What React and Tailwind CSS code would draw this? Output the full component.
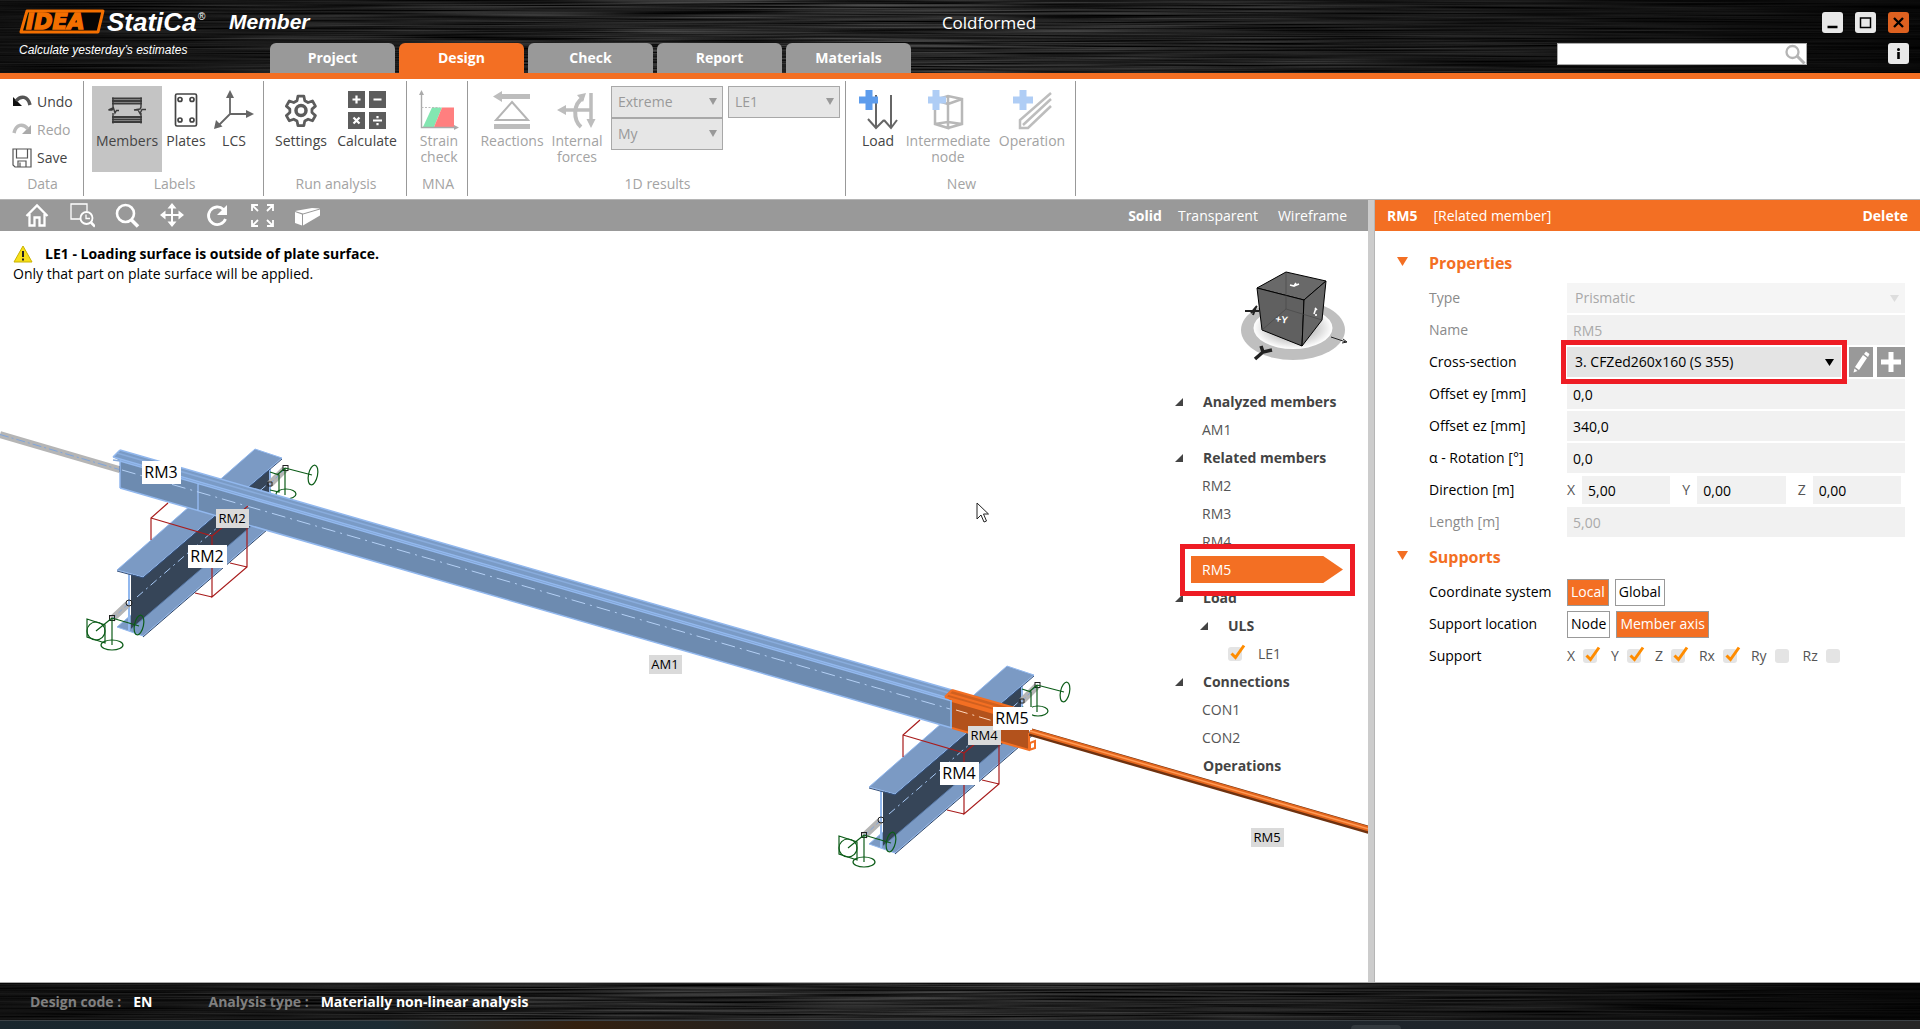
import React from "react";

const uiFont = "font-['Open_Sans','Noto_Sans',sans-serif]";

function BrushedMetal({ seed }) {
  const id = "metal" + seed;
  return (
    <svg className="absolute inset-0 h-full w-full" preserveAspectRatio="none" aria-hidden="true">
      <defs>
        <filter id={id} x="0" y="0" width="100%" height="100%" colorInterpolationFilters="sRGB">
          <feTurbulence type="fractalNoise" baseFrequency="0.005 0.6" numOctaves="2" seed={seed} />
          <feColorMatrix values="0.6 0 0 0 -0.12  0.6 0 0 0 -0.12  0.6 0 0 0 -0.12  0 0 0 0 1" />
        </filter>
        <linearGradient id={id + "g"}>
          <stop offset="0" stopColor="#000" stopOpacity="0.65" />
          <stop offset="0.3" stopColor="#000" stopOpacity="0.3" />
          <stop offset="0.5" stopColor="#000" stopOpacity="0.2" />
          <stop offset="0.75" stopColor="#000" stopOpacity="0.5" />
          <stop offset="1" stopColor="#000" stopOpacity="0.85" />
        </linearGradient>
      </defs>
      <rect width="100%" height="100%" filter={`url(#${id})`} />
      <rect width="100%" height="100%" fill={`url(#${id}g)`} />
    </svg>
  );
}

function Logo() {
  return (
    <svg width="330" height="62" viewBox="0 0 330 62" className="relative block" role="img" aria-label="IDEA StatiCa Member">
      <polygon points="27,11 103,11 98,32 21,32" fill="#050505" stroke="#f36f00" strokeWidth="3" strokeLinejoin="round" />
      <text x="26" y="29" fontFamily="DejaVu Sans" fontWeight="700" fontStyle="italic" fontSize="22" fill="#f36f00" stroke="#f36f00" strokeWidth="1.500">IDEA</text>
      <text x="107" y="31" fontFamily="Liberation Sans" fontWeight="700" fontStyle="italic" fontSize="26" fill="#fff">StatiCa</text>
      <text x="198" y="20" fontFamily="Liberation Sans" fontSize="10" fill="#fff">®</text>
      <text x="229" y="29" fontFamily="Liberation Sans" fontWeight="700" fontStyle="italic" fontSize="21" fill="#fff">Member</text>
      <text x="19" y="54" fontFamily="Liberation Sans" fontStyle="italic" fontSize="12" fill="#fff">Calculate yesterday’s estimates</text>
    </svg>
  );
}

function Header() {
  const tabs = ["Project", "Design", "Check", "Report", "Materials"];
  const chrome = "flex h-[21px] w-[21px] items-center justify-center rounded-[3px] bg-[#e8e8e8]";
  return (
    <header className="relative flex h-[79px] justify-between overflow-hidden border-b-[6px] border-[#f36f23] bg-black">
      <BrushedMetal seed={4} />
      <div className="absolute left-0 top-0"><Logo /></div>
      <h1 className="absolute inset-x-0 top-3 pl-[58px] text-center text-[17px] leading-[22px] text-white">Coldformed</h1>
      <nav className="relative flex items-end gap-1 pl-[270px]">
        {tabs.map((t) => (
          <button key={t} className={`h-[30px] w-[125px] rounded-t-md pb-px text-sm font-bold text-white ${t === "Design" ? "bg-[#f36f23]" : "bg-[#999]"}`}>{t}</button>
        ))}
      </nav>
      <div className="relative flex flex-col items-end gap-[10px] pr-[11px] pt-3">
        <div className="flex gap-3">
          <button aria-label="Minimize" className={chrome}>
            <svg width="15" height="15"><path d="M2.500 12h10" stroke="#000" strokeWidth="2.500" /></svg>
          </button>
          <button aria-label="Maximize" className={chrome}>
            <svg width="15" height="15"><rect x="2.500" y="3" width="10" height="9.500" fill="none" stroke="#000" strokeWidth="1.500" /></svg>
          </button>
          <button aria-label="Close" className="flex h-[21px] w-[21px] items-center justify-center rounded-[3px] bg-[#dd6120]">
            <svg width="15" height="15"><path d="M3 3l9 9M12 3l-9 9" stroke="#000" strokeWidth="2.300" /></svg>
          </button>
        </div>
        <div className="flex gap-[81px]">
          <div className="relative">
            <input aria-label="Search" className="block h-[22px] w-[250px] border border-[#aaa] bg-white px-1 text-sm outline-none" />
            <svg className="absolute right-px top-0" width="22" height="22" fill="none" stroke="#b4b4b4" strokeWidth="2.300"><circle cx="8.500" cy="9" r="6" /><path d="M13 13l7.500 7.500" strokeWidth="3" /></svg>
          </div>
          <button aria-label="Info" className={chrome}>
            <svg width="9" height="15"><circle cx="4.500" cy="3.500" r="1.500" /><path d="M4.500 6v7" stroke="#000" strokeWidth="2.600" /></svg>
          </button>
        </div>
      </div>
    </header>
  );
}

const icons = {
  undo: <svg width="20" height="14" viewBox="0 0 20 14"><path d="M1 2v9h9z" fill="#111" /><path d="M4 6C9 0 16 1 18 10" fill="none" stroke="#555" strokeWidth="3.500" /></svg>,
  redo: <svg width="20" height="14" viewBox="0 0 20 14"><path d="M19 2v9h-9z" fill="#aaa" /><path d="M16 6C11 0 4 1 2 10" fill="none" stroke="#bbb" strokeWidth="3.500" /></svg>,
  save: <svg width="20" height="20" viewBox="0 0 20 20" fill="none" stroke="#555" strokeWidth="1.200"><path d="M1 1h18v18H3l-2-2zM4.500 1v9h11V1M6 19v-6h8v6M8 14.500v4" /></svg>,
  members: <svg width="40" height="40" viewBox="0 0 40 40" fill="none" stroke="#3c3c3c" strokeWidth="1.600"><path d="M5 8.500h30M5 11h30M5 13.500h30" strokeWidth="2.200" /><path d="M5 27h30M5 29.500h30M5 32h30" strokeWidth="2.200" /><path d="M6 7.500V18l-4.500 2H5l1.500-2 1.500 5 1.500-2.500H12M6 33.500V23M34 7.500V17l-1 2-6 1h4l2 3.500 2-4h4M34 33.500V23" strokeWidth="1.400" /></svg>,
  plates: <svg width="40" height="40" viewBox="0 0 40 40" fill="none" stroke="#444" strokeWidth="1.700"><rect x="9.500" y="4" width="21" height="32" rx="1.500" /><circle cx="14" cy="9.500" r="2" /><circle cx="26" cy="9.500" r="2" /><circle cx="14" cy="30" r="2" /><circle cx="26" cy="30" r="2" /></svg>,
  lcs: <svg width="40" height="40" viewBox="0 0 40 40" fill="#666" stroke="#666" strokeWidth="1.800"><path d="M16 6v18h18M16 24L4 36" fill="none" /><path d="M16 0l4 8h-8zM40 24l-8 4v-8zM0 39l2-9 6.500 6.500z" stroke="none" /></svg>,
  settings: <svg width="40" height="40" viewBox="0 0 40 40" fill="none" stroke="#5c5c5c" strokeWidth="3" strokeLinejoin="round"><path d="M16.800 5h6.400l1 5 3.600 2 4.800-1.700 3.200 5.600-3.800 3.300v3.700l3.800 3.300-3.200 5.600-4.800-1.700-3.600 2-1 5h-6.400l-1-5-3.600-2-4.800 1.700-3.200-5.600 3.800-3.300v-3.700l-3.800-3.300 3.200-5.600 4.800 1.700 3.600-2z" transform="translate(1.500 1.500) scale(0.920)" /><circle cx="20" cy="20.500" r="5" strokeWidth="3.500" /></svg>,
  calculate: <svg width="40" height="40" viewBox="0 0 40 40" fill="#5c5c5c"><path d="M1 1h17v17H1zM22 1h17v17H22zM1 22h17v17H1zM22 22h17v17H22z" /><path d="M9.500 5.500v8M5.500 9.500h8M26.500 9.500h8M6.500 27.500l6 6M12.500 27.500l-6 6M26 30.500h9M30.500 26v2.200M30.500 33v2.200" stroke="#fff" strokeWidth="2.200" /></svg>,
  strain: <svg width="40" height="40" viewBox="0 0 40 40"><path d="M13 17.500h10L15 37H4z" fill="#83e6b1" /><path d="M23 17.500h12V37H15z" fill="#ff7f7f" /><path d="M2.500 3v34.500H37" fill="none" stroke="#aaa" strokeWidth="1.400" /><path d="M2.500 17.500h18" stroke="#bbb" strokeDasharray="2 1.500" /><path d="M2.500 0l2.500 5H0zM40 37.500l-5 2.500v-5z" fill="#aaa" /></svg>,
  reactions: <svg width="40" height="40" viewBox="0 0 40 40" fill="#bdbdbd"><path d="M10 4h28v5H10v3L1 6.500 10 1zM2 34h36v5H2z" /><path d="M20 12l16 18H4z" fill="none" stroke="#b5b5b5" strokeWidth="2" /></svg>,
  forces: <svg width="40" height="40" viewBox="0 0 40 40" fill="#bdbdbd" stroke="#bdbdbd"><path d="M6 20h28" strokeWidth="3.500" /><path d="M26 8c-10 6-10 22-2 29" fill="none" strokeWidth="4" /><path d="M34 3v29" strokeWidth="3.500" /><path d="M0 20l9-5v10zM29 3l-9 2 6 7zM34 38l-4.500-9H38.500z" stroke="none" /></svg>,
  load: <svg width="40" height="40" viewBox="0 0 40 40" fill="none" stroke="#666" strokeWidth="2"><path d="M18 5v32M10 29l8 9 8-8M33 5v32M26 30l7 8 6-8" /><path d="M11 0v20M1 10h19" stroke="#5d9cec" strokeWidth="7" /></svg>,
  node: <svg width="40" height="40" viewBox="0 0 40 40" fill="none" stroke="#b8b8b8" strokeWidth="2.500"><path d="M7 10v24l13 4V14L7 10l13-4 14 3v25l-14 4M20 14l14-5M20 6v26L7 34M20 32l14 2" /><path d="M8 0v20M-2 10h20" stroke="#afcdf5" strokeWidth="7" /></svg>,
  operation: <svg width="40" height="40" viewBox="0 0 40 40" fill="none" stroke="#bdbdbd" strokeWidth="2.500"><path d="M39 3L8 30v8h8L39 16M11 35L39 9" /><path d="M11 0v20M1 10h20" stroke="#afcdf5" strokeWidth="7" /></svg>,
};

function Tool({ icon, label, width, active, muted }) {
  return (
    <button className={`flex h-[86px] flex-col items-center pt-1 text-sm leading-4 ${width} ${active ? "bg-[#c4c4c4]" : ""} ${muted ? "text-[#a3a3a3]" : "text-[#444]"}`}>
      {icons[icon]}
      <span className="pt-[3px]">{label}</span>
    </button>
  );
}

function Group({ caption, width, children }) {
  return (
    <section className={`flex h-[115px] shrink-0 flex-col justify-between border-r border-[#999] ${width}`}>
      {children}
      <div className="pl-[2px] text-center text-sm leading-6 text-[#a3a3a3]">{caption}</div>
    </section>
  );
}

function RibbonSelect({ value, label }) {
  return (
    <div className="relative h-8 w-[112px]">
      <select aria-label={label} disabled className="h-full w-full appearance-none border border-[#a8a8a8] bg-[#e6e6e6] pl-[6px] text-sm text-[#999] opacity-100">
        <option>{value}</option>
      </select>
      <svg className="pointer-events-none absolute right-[6px] top-3" width="8" height="7"><path d="M0 0h8l-4 7z" fill="#999" /></svg>
    </div>
  );
}

function Ribbon() {
  const small = "flex h-7 items-center gap-[5px]";
  return (
    <div className="flex h-[121px] border-b border-[#b5b5b5] bg-white pt-[2px]">
      <Group caption="Data" width="w-[84px]">
        <div className="flex flex-col pl-3 pt-[7px] text-sm text-[#444]">
          <button className={small}>{icons.undo}Undo</button>
          <button className={small + " text-[#a3a3a3]"}>{icons.redo}Redo</button>
          <button className={small}>{icons.save}Save</button>
        </div>
      </Group>
      <Group caption="Labels" width="w-[180px]">
        <div className="flex pl-2 pt-[5px]">
          <Tool icon="members" label="Members" width="w-[70px]" active />
          <Tool icon="plates" label="Plates" width="w-12" />
          <Tool icon="lcs" label="LCS" width="w-12" />
        </div>
      </Group>
      <Group caption="Run analysis" width="w-[143px]">
        <div className="flex pl-1 pt-[5px]">
          <Tool icon="settings" label="Settings" width="w-[66px]" />
          <Tool icon="calculate" label="Calculate" width="w-[66px]" />
        </div>
      </Group>
      <Group caption="MNA" width="w-[61px]">
        <div className="flex pl-1 pt-[5px]">
          <Tool icon="strain" label={<>Strain<br />check</>} width="w-14" muted />
        </div>
      </Group>
      <Group caption="1D results" width="w-[378px]">
        <div className="flex pl-[9px] pt-[5px]">
          <Tool icon="reactions" label="Reactions" width="w-[70px]" muted />
          <Tool icon="forces" label={<>Internal<br />forces</>} width="w-[60px]" muted />
          <div className="ml-1 flex gap-[5px]">
            <div>
              <RibbonSelect label="Extreme type" value="Extreme" />
              <RibbonSelect label="Result component" value="My" />
            </div>
            <RibbonSelect label="Load effect" value="LE1" />
          </div>
        </div>
      </Group>
      <Group caption="New" width="w-[230px]">
        <div className="flex pl-2 pt-[5px]">
          <Tool icon="load" label="Load" width="w-12" />
          <Tool icon="node" label={<>Intermediate<br />node</>} width="w-[92px]" muted />
          <Tool icon="operation" label="Operation" width="w-[76px]" muted />
        </div>
      </Group>
    </div>
  );
}

const viewIcons = [
  ["Home", <path key="a" d="M1.500 13L12 2.500 22.500 13M4.500 11v11.500h5v-8h5v8h5V11" fill="none" stroke="#fff" strokeWidth="2.300" />],
  ["Zoom window", <g key="a" fill="none" stroke="#fff" strokeWidth="1.300"><path d="M17 8V1H1v15h9" /><circle cx="16.500" cy="15" r="6" strokeWidth="1.800" /><path d="M16 11.500V15.500h4" /><path d="M21 19.500l4 4" strokeWidth="2.600" /></g>],
  ["Zoom", <g key="a" fill="none" stroke="#fff"><circle cx="10.500" cy="10.500" r="8.500" strokeWidth="2.600" /><path d="M16.500 17l6.500 6.500" strokeWidth="3.500" /></g>],
  ["Pan", <g key="a" fill="#fff"><path d="M11 5h2v14h-2zM5 11h14v2H5z" /><path d="M12 0l4.500 5.500h-9zM12 24l4.500-5.500h-9zM0 12l5.500-4.500v9zM24 12l-5.500-4.500v9z" /></g>],
  ["Rotate", <g key="a"><path d="M18.500 6.500A8.800 8.800 0 1 0 20.500 16" fill="none" stroke="#fff" strokeWidth="2.800" /><path d="M22 2v10H12z" fill="#fff" /></g>],
  ["Fit", <g key="a" fill="none" stroke="#fff" strokeWidth="1.800"><path d="M2 8V2h6M2 2l6 6M17 2h6v6M23 2l-6 6M2 17v6h6M2 23l6-6M17 23h6v-6M23 23l-6-6" /></g>],
  ["Section", <g key="a" fill="#fff"><path d="M0 9l7 2.500v11l-7-2.500zM8 11.500l17-5v6L8 22.500zM0 8l17-3 8 .5-17 5z" /></g>],
];

function ViewBar() {
  return (
    <div className="flex h-[31px] items-center justify-between bg-[#999] pl-[14px] pr-[21px] pt-px text-white">
      <div className="flex">
        {viewIcons.map(([name, art]) => (
          <button key={name} aria-label={name} className="flex w-[45px] justify-center"><svg width="26" height="26" viewBox="-1 0 26 26">{art}</svg></button>
        ))}
      </div>
      <div className="flex gap-4 text-sm">
        <button className="font-bold">Solid</button>
        <button>Transparent</button>
        <button className="ml-1">Wireframe</button>
      </div>
    </div>
  );
}

function CrossMember() {
  return (
    <g>
      <polygon points="117,627 143,636 282,516 255,508" fill="#7b9ac4" stroke="#92b8ee" />
      <path d="M143 637L282 517" stroke="#2b4468" />
      <polygon points="131,575 270,456 270,510 131,629" fill="#364558" />
      <path d="M131 629L270 510" stroke="#5878a5" />
      <path d="M137 597L270 482" stroke="#a9cbf8" strokeDasharray="8 4 2 4" />
      <path d="M129 574v57M270 469v40" stroke="#92b8ee" strokeWidth="2" />
      <polygon points="117,570 143,577 282,458 255,449" fill="#7b9ac4" stroke="#92b8ee" />
      <path d="M117 571l26 7L282 459" fill="none" stroke="#34507a" />
      <path d="M128 604l-16 15M270 484l15-15" stroke="#b5b5b5" strokeWidth="7" />
      <path d="M128 604l-16 15M270 484l15-15" stroke="#7fa5dc" strokeDasharray="5 3" />
      <g fill="none" stroke="#222"><circle cx="129" cy="603" r="3" /><rect x="109.500" y="615.500" width="5" height="5" /><rect x="283" y="465.500" width="5" height="5" /><path d="M268 482h4v4h-4z" /></g>
      <g fill="none" stroke="#0c5c18" strokeWidth="1.200">
        <path d="M112 618v27M112 618l27 8M112 618l-16 13M87 619l18 6v18l-18-6z" />
        <ellipse cx="112" cy="645" rx="11" ry="5" /><ellipse cx="139" cy="625" rx="4.500" ry="10" transform="rotate(12 139 625)" /><circle cx="96" cy="631" r="9" />
        <path d="M285 468v27M285 468l27 7M270 472l9 3v17l-9-2M285 468l-8 7" />
        <ellipse cx="286" cy="494" rx="10" ry="5" /><ellipse cx="313" cy="475" rx="4.500" ry="10" transform="rotate(12 313 475)" />
      </g>
    </g>
  );
}

function HiddenBox() {
  return <path d="M168 503l-17 15v22M151 518l61 18v61l35-30v-40M212 536l36-30M212 597l-17-4M247 567l-17-4" fill="none" stroke="#a81c1c" strokeWidth="1.200" />;
}

function Tag({ x, y, text, big }) {
  return (
    <g>
      <rect x={x} y={y} width={big ? 39 : 33} height={big ? 23 : 19} fill={big ? "#fff" : "#dadada"} />
      <text x={x + (big ? 19 : 16)} y={y + (big ? 17 : 14)} textAnchor="middle" fontSize={big ? 16 : 13} fill="#000" className={uiFont}>{text}</text>
    </g>
  );
}

function Scene() {
  return (
    <svg className="absolute inset-0 h-full w-full" viewBox="0 231 1368 751" preserveAspectRatio="xMinYMin slice" role="img" aria-label="3D model of the members">
      <path d="M0 434.500L121 470" stroke="#b5b5b5" strokeWidth="7" />
      <path d="M0 434.500L121 470" stroke="#7fa5dc" strokeDasharray="9 3 2 3" />
      <path d="M120 466v6" stroke="#222" strokeWidth="2" />
      <CrossMember />
      <g transform="translate(752 217)"><CrossMember /></g>
      <polygon points="120,460 952,700 952,728 120,488" fill="#6d8bb0" />
      <polygon points="120,450 952,690 945,698 952,701 120,461 113,457" fill="#7a9bc6" />
      <g fill="none" stroke="#92b8ee" strokeWidth="1.500">
        <path d="M120 450L952 690M113 457L945 697M120 461L952 701M120 488L952 728M120 488v-28M198 483v28M113 457l7-7" />
        <path d="M117 453L949 693M113 460l7 1" stroke="#89acdc" />
        <path d="M122 470L950 709" stroke="#b4d0f5" strokeWidth="1" strokeDasharray="14 5 2 5" />
      </g>
      <HiddenBox />
      <g transform="translate(752 217)"><HiddenBox /></g>
      <polygon points="952,700 1029,722 1029,750 952,728" fill="#b3521c" />
      <polygon points="952,690 1029,712 1029,723 952,701 945,697" fill="#d0601f" />
      <path d="M952 690L1029 712M945 697L1029 721M952 701L1029 723M949 694l80 23M952 728l77 22v-17M945 697l7-7M1029 750l6-2v-7l-5 2v6" fill="none" stroke="#f36f23" strokeWidth="2" />
      <path d="M951 700v28" stroke="#92b8ee" strokeWidth="1.500" />
      <path d="M956 710L1000 723" stroke="#ffd9c0" strokeDasharray="12 5 2 5" />
      <path d="M1030 732L1369 830" stroke="#6f3210" strokeWidth="8" />
      <path d="M1030 731L1369 829" stroke="#e4661d" strokeWidth="5" />
      <path d="M1030 731L1369 829" stroke="#ff9a55" strokeWidth="1.500" />
      <Tag x={142} y={461} text="RM3" big />
      <Tag x={216} y={509} text="RM2" />
      <Tag x={188} y={545} text="RM2" big />
      <Tag x={649} y={655} text="AM1" />
      <Tag x={968} y={726} text="RM4" />
      <Tag x={993} y={707} text="RM5" big />
      <Tag x={940} y={762} text="RM4" big />
      <Tag x={1251} y={828} text="RM5" />
      <path d="M977 503v16l4-4 3 7 2.500-1-3-7h5z" fill="#fff" stroke="#222" />
      <NavigationCube />
    </svg>
  );
}

function NavigationCube() {
  return (
    <g>
      <defs><radialGradient id="shade"><stop offset="0" stopColor="#888" /><stop offset="1" stopColor="#fff" /></radialGradient></defs>
      <ellipse cx="1293" cy="330" rx="52" ry="30" fill="#bfbfbf" />
      <ellipse cx="1293" cy="328" rx="39.500" ry="21" fill="url(#shade)" />
      <g stroke="#000" strokeLinejoin="round">
        <polygon points="1286,272 1326,281 1304,300 1257,288" fill="#696969" />
        <polygon points="1257,288 1304,300 1302,346 1262,330" fill="#606060" />
        <polygon points="1304,300 1326,281 1322,320 1302,346" fill="#666" />
      </g>
      <path d="M1286 273v36l36 11M1286 309l-24 21" fill="none" stroke="#444" strokeOpacity="0.600" />
      <text x="1275" y="322" fontFamily="Liberation Sans" fontSize="10" fontWeight="700" fill="#fff" transform="rotate(8 1275 322)">+Y</text>
      <path d="M1290 285l4 1 2-3M1294 286l5-2M1314 314l2-6M1315 308l2 2M1316 314v2" fill="none" stroke="#fff" strokeWidth="1.600" />
      <path d="M1245 311h14M1251 313l6-7M1256 307l-3 8" stroke="#222" strokeWidth="2" />
      <path d="M1255 359l8-7 9-2M1263 352l-2-6" fill="none" stroke="#222" strokeWidth="3.500" />
      <path d="M1331 337l15 5M1343 339l4 3-5 1" fill="none" stroke="#222" />
    </g>
  );
}

function Tick({ checked, label }) {
  return (
    <span className="relative inline-block h-[14px] w-[14px]">
      <input type="checkbox" aria-label={label} defaultChecked={checked} className="peer block h-[14px] w-[14px] appearance-none rounded-[3px] bg-[#e4e4e4]" />
      <svg className="pointer-events-none absolute -top-[3px] left-[2px] hidden peer-checked:block" width="16" height="16"><path d="M1.500 9.500l4 4L14 1.500" fill="none" stroke="#ff8c00" strokeWidth="3" /></svg>
    </span>
  );
}

function Caret() {
  return <svg width="8" height="8" className="mr-5 shrink-0"><path d="M8 0v8H0z" fill="#444" /></svg>;
}

function Tree() {
  const head = "flex h-7 items-center font-bold text-[#444]";
  const item = "flex h-7 items-center pl-[27px] text-[#555]";
  return (
    <ul className="absolute right-0 top-[157px] w-[193px] text-sm">
      <li className={head}><Caret />Analyzed members</li>
      <li className={item}>AM1</li>
      <li className={head}><Caret />Related members</li>
      <li className={item}>RM2</li>
      <li className={item}>RM3</li>
      <li className={item}>RM4</li>
      <li className="relative z-10 h-7">
        <div className="absolute -top-3 left-[5px] h-[52px] w-[175px] border-[5px] border-[#ee1c24] bg-white" />
        <button className="absolute left-4 top-0 flex h-[27px] w-[152px] items-center bg-[#f36f23] pl-[11px] text-white [clip-path:polygon(0_0,87%_0,100%_50%,87%_100%,0_100%)]">RM5</button>
      </li>
      <li className={head}><Caret />Load</li>
      <li className={head + " pl-[25px]"}><Caret />ULS</li>
      <li className="flex h-7 items-center gap-4 pl-[53px] text-[#555]"><Tick checked label="LE1" />LE1</li>
      <li className={head}><Caret />Connections</li>
      <li className={item}>CON1</li>
      <li className={item}>CON2</li>
      <li className={head + " pl-7"}>Operations</li>
    </ul>
  );
}

function Viewport() {
  return (
    <main className="flex min-w-0 flex-1 flex-col">
      <ViewBar />
      <div className="relative flex-1 overflow-hidden bg-white">
        <Scene />
        <div className="relative pl-[13px] pt-[13px] text-sm leading-5 text-black">
          <p className="flex items-center gap-3 font-bold">
            <svg width="20" height="18"><path d="M10 1l9 16H1z" fill="#f8e01a" stroke="#c9b200" /><path d="M10 6v6M10 13.500v2" stroke="#222" strokeWidth="2" /></svg>
            LE1 - Loading surface is outside of plate surface.
          </p>
          <p>Only that part on plate surface will be applied.</p>
        </div>
        <Tree />
      </div>
    </main>
  );
}

function Row({ label, id, muted, children }) {
  return (
    <div className="flex h-8 items-center">
      <label htmlFor={id} className={`w-[138px] shrink-0 ${muted ? "text-[#8a8a8a]" : "text-black"}`}>{label}</label>
      {children}
    </div>
  );
}

function Field({ id, value, muted }) {
  return <input id={id} defaultValue={value} disabled={muted} className={`h-[30px] min-w-0 flex-1 bg-[#f1f1f1] px-[6px] ${muted ? "text-[#aaa]" : "text-black"}`} />;
}

function SectionTitle({ children }) {
  return (
    <h2 className="-ml-[32px] flex h-[38px] items-center gap-[21px] text-base font-bold text-[#f36f23]">
      <svg width="11" height="9" className="-mt-1"><path d="M0 0h11l-5.500 9z" fill="#f36f23" /></svg>
      {children}
    </h2>
  );
}

function Properties() {
  const toggle = "h-[27px] border border-[#999] px-[3px]";
  return (
    <aside className="w-[545px] shrink-0 bg-white text-sm">
      <div className="flex h-[31px] items-center bg-[#f36f23] px-3 pt-px text-white">
        <span className="font-bold">RM5</span>
        <span className="ml-4 flex-1">[Related member]</span>
        <button className="font-bold">Delete</button>
      </div>
      <form className="pl-[54px] pr-[15px] pt-[13px]">
        <SectionTitle>Properties</SectionTitle>
        <Row label="Type" id="type" muted>
          <div className="relative h-[30px] flex-1">
            <select id="type" disabled className="h-full w-full appearance-none bg-[#f5f5f5] pl-2 text-[#a8a8a8] opacity-100"><option>Prismatic</option></select>
            <svg className="pointer-events-none absolute right-[6px] top-3" width="9" height="7"><path d="M0 0h9l-4.500 7z" fill="#ddd" /></svg>
          </div>
        </Row>
        <Row label="Name" id="name" muted><Field id="name" value="RM5" muted /></Row>
        <Row label="Cross-section" id="section">
          <div className="relative z-10 h-[30px] flex-1">
            <div className="pointer-events-none absolute -inset-x-[6px] -inset-y-[7px] border-[5px] border-[#ee1c24] bg-white" />
            <select id="section" className="relative h-full w-full appearance-none bg-[#e4e4e4] pl-2 text-black"><option>3. CFZed260x160 (S 355)</option></select>
            <svg className="pointer-events-none absolute right-[7px] top-3" width="9" height="7"><path d="M0 0h9l-4.500 7z" /></svg>
          </div>
          <button type="button" aria-label="Edit cross-section" className="ml-2 flex h-[30px] w-6 items-center justify-center bg-[#999]">
            <svg width="18" height="22" fill="#fff"><path d="M11 4l4 3-8 12-4-3zM12 3l2-2.500 3.500 2.500-1.500 3zM2.500 17.500l3 2.500-4 1.500z" /></svg>
          </button>
          <button type="button" aria-label="Add cross-section" className="ml-1 flex h-[30px] w-7 items-center justify-center bg-[#999]">
            <svg width="20" height="20"><path d="M10 0v20M0 10h20" stroke="#fff" strokeWidth="5" /></svg>
          </button>
        </Row>
        <Row label="Offset ey [mm]" id="ey"><Field id="ey" value="0,0" /></Row>
        <Row label="Offset ez [mm]" id="ez"><Field id="ez" value="340,0" /></Row>
        <Row label="α - Rotation [°]" id="rot"><Field id="rot" value="0,0" /></Row>
        <Row label="Direction [m]" id="dirX">
          <div className="flex flex-1 gap-3 pr-1 text-[#555]">
            {[["X", "5,00"], ["Y", "0,00"], ["Z", "0,00"]].map(([axis, value]) => (
              <label key={axis} className="flex min-w-0 flex-1 items-center">
                <span className="w-[15px] shrink-0">{axis}</span>
                <input id={"dir" + axis} defaultValue={value} className="h-7 w-full min-w-0 bg-[#f1f1f1] px-[6px] text-black" />
              </label>
            ))}
          </div>
        </Row>
        <Row label="Length [m]" id="len" muted><Field id="len" value="5,00" muted /></Row>
        <SectionTitle>Supports</SectionTitle>
        <Row label="Coordinate system">
          <div className="flex gap-[6px]">
            <button type="button" className={toggle + " bg-[#f36f23] text-white"}>Local</button>
            <button type="button" className={toggle + " bg-white text-black"}>Global</button>
          </div>
        </Row>
        <Row label="Support location">
          <div className="flex gap-[6px]">
            <button type="button" className={toggle + " bg-white text-black"}>Node</button>
            <button type="button" className={toggle + " bg-[#f36f23] text-white"}>Member axis</button>
          </div>
        </Row>
        <Row label="Support">
          <div className="flex gap-[14px] text-[#555]">
            {["X", "Y", "Z", "Rx", "Ry", "Rz"].map((axis, i) => (
              <label key={axis} className="flex items-center gap-2">{axis}<Tick checked={i < 4} label={axis} /></label>
            ))}
          </div>
        </Row>
      </form>
    </aside>
  );
}

export default function App() {
  return (
    <div className={`flex min-h-screen flex-col bg-white ${uiFont}`}>
      <Header />
      <Ribbon />
      <div className="flex flex-1">
        <Viewport />
        <div className="w-[7px] shrink-0 border-r border-[#b5b5b5] bg-[#ccc]" />
        <Properties />
      </div>
      <footer className="relative h-[38px] overflow-hidden border-t border-[#aaa] bg-black">
        <BrushedMetal seed={9} />
        <div className="relative flex h-full items-center pl-[30px] text-sm font-bold text-white">
          <span className="text-[#808080]">Design code :</span><span className="ml-3">EN</span>
          <span className="ml-14 text-[#808080]">Analysis type :</span><span className="ml-3">Materially non-linear analysis</span>
        </div>
      </footer>
      <div className="flex h-[9px] items-end justify-end border-t border-[#3c4246] bg-[linear-gradient(90deg,#19262d,#1c2b33_20%,#33200f_30%,#1c2228_45%,#1f252b_75%,#262626)] pr-[519px]">
        <div className="h-1 w-[50px] rounded-t bg-[#33393e]" />
      </div>
    </div>
  );
}
